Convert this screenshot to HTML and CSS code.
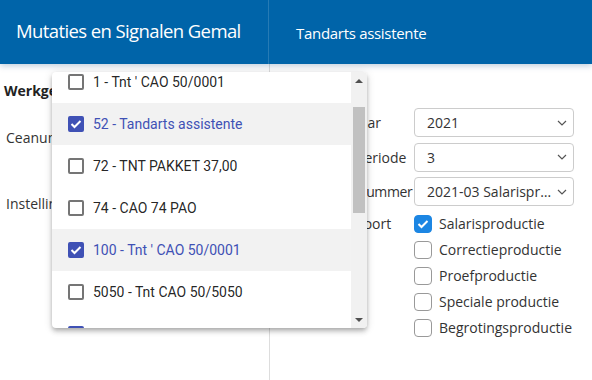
FILE: index.html
```html
<!doctype html>
<html lang="nl">
	<head>
		<meta charset="UTF-8" />
		<meta name="viewport" content="width=device-width, initial-scale=1.0" />
		<title>Mutaties en Signalen Gemal</title>
		<link rel="stylesheet" href="styles.css">
	</head>
	<body>
		<header class="topbar">
			<div class="brand">Mutaties en Signalen Gemal</div>
			<div class="context">Tandarts assistente</div>
		</header>

		<main class="content">
			<aside class="sidebar">
				<div class="side-title">Werkgever</div>
				<div class="side-field">Ceanummer</div>
				<div class="side-field side-field-low">Instellingen</div>
			</aside>

			<section class="form">
				<label class="form-label">Jaar</label>
				<div class="select">
					<span class="select-value">2021</span>
					<svg class="chevron" width="10" height="6" viewBox="0 0 10 6"><polyline points="1,1 5,5 9,1" /></svg>
				</div>

				<label class="form-label">Periode</label>
				<div class="select">
					<span class="select-value">3</span>
					<svg class="chevron" width="10" height="6" viewBox="0 0 10 6"><polyline points="1,1 5,5 9,1" /></svg>
				</div>

				<label class="form-label form-label-tight">Nummer</label>
				<div class="select">
					<span class="select-value">2021-03 Salarisproductie</span>
					<svg class="chevron" width="10" height="6" viewBox="0 0 10 6"><polyline points="1,1 5,5 9,1" /></svg>
				</div>

				<label class="form-label form-label-top">Soort</label>
				<div class="checks">
					<div class="check-row">
						<span class="check checked">
							<svg width="12" height="10" viewBox="0 0 12 10"><polyline points="1.5,5 4.5,8 10.5,2" /></svg>
						</span>
						Salarisproductie
					</div>
					<div class="check-row"><span class="check"></span>Correctieproductie</div>
					<div class="check-row"><span class="check"></span>Proefproductie</div>
					<div class="check-row"><span class="check"></span>Speciale productie</div>
					<div class="check-row"><span class="check"></span>Begrotingsproductie</div>
				</div>
			</section>

			<!-- open multi-select panel -->
			<div class="dropdown">
				<div class="options">
					<div class="option">
						<span class="box"></span>1 - Tnt ' CAO 50/0001
					</div>
					<div class="option selected">
						<span class="box"><svg width="12" height="10" viewBox="0 0 12 10"><polyline points="1.5,5 4.5,8 10.5,2" /></svg></span>52 - Tandarts assistente
					</div>
					<div class="option">
						<span class="box"></span>72 - TNT PAKKET 37,00
					</div>
					<div class="option">
						<span class="box"></span>74 - CAO 74 PAO
					</div>
					<div class="option selected">
						<span class="box"><svg width="12" height="10" viewBox="0 0 12 10"><polyline points="1.5,5 4.5,8 10.5,2" /></svg></span>100 - Tnt ' CAO 50/0001
					</div>
					<div class="option">
						<span class="box"></span>5050 - Tnt CAO 50/5050
					</div>
					<div class="option option-checked">
						<span class="box"><svg width="12" height="10" viewBox="0 0 12 10"><polyline points="1.5,5 4.5,8 10.5,2" /></svg></span>
					</div>
				</div>
				<div class="scrollbar">
					<div class="scroll-btn"><span class="arrow-up"></span></div>
					<div class="scroll-track"><div class="scroll-thumb"></div></div>
					<div class="scroll-btn"><span class="arrow-down"></span></div>
				</div>
			</div>
		</main>
	</body>
</html>
```

FILE: styles.css
```css
body {
	margin: 0;
	font-family: "Open Sans", "Noto Sans", sans-serif;
	font-size: 14px;
	color: #333;
	background-color: #fff;
	height: 100vh;
	display: flex;
	flex-direction: column;
	overflow: hidden;
}
.topbar {
	display: flex;
	height: 64px;
	background-color: #0064a9;
	color: #fff;
	box-shadow: 0 2px 6px rgba(0, 60, 120, 0.25);
	position: relative;
	z-index: 1;
	flex-shrink: 0;
}
.brand {
	width: 252px;
	padding-left: 16px;
	border-right: 1px solid rgba(255, 255, 255, 0.15);
	font-size: 18.5px;
	letter-spacing: -0.6px;
	line-height: 62px;
	white-space: nowrap;
}
.context {
	padding-left: 27px;
	font-size: 15px;
	letter-spacing: -0.3px;
	line-height: 66px;
}
.content {
	flex: 1;
	display: flex;
	position: relative;
}
.sidebar {
	width: 270px;
	border-right: 1px solid #ddd;
	padding: 17px 0 0 4px;
	box-sizing: border-box;
	white-space: nowrap;
	overflow: hidden;
}
.side-title {
	font-weight: bold;
	line-height: 20px;
	color: #222;
}
.side-field {
	margin: 27px 0 0 2px;
	line-height: 20px;
}
.side-field-low {
	margin-top: 46px;
}
.form {
	flex: 1;
	display: grid;
	grid-template-columns: 58px 160px;
	grid-auto-rows: 29px;
	row-gap: 5.5px;
	align-content: start;
	padding: 44px 0 0 86px;
}
.form-label {
	align-self: center;
	white-space: nowrap;
}
.form-label-tight {
	letter-spacing: -0.4px;
}
.form-label-top {
	align-self: start;
	line-height: 26px;
	margin-top: -1px;
}
.select {
	display: flex;
	align-items: center;
	border: 1px solid #ccc;
	border-radius: 4px;
	padding: 0 6px 0 12px;
	min-width: 0;
}
.select-value {
	flex: 1;
	min-width: 0;
	overflow: hidden;
	text-overflow: ellipsis;
	white-space: nowrap;
}
.chevron {
	flex-shrink: 0;
	margin-left: 3px;
	fill: none;
	stroke: #555;
	stroke-width: 1.2;
}
.checks {
	grid-row: span 5;
	margin-top: -1px;
}
.check-row {
	display: flex;
	align-items: center;
	gap: 7px;
	height: 26px;
	white-space: nowrap;
}
.check {
	width: 16px;
	height: 16px;
	border: 1px solid #999;
	border-radius: 4px;
	display: flex;
	align-items: center;
	justify-content: center;
}
.check.checked {
	background-color: #1c86e3;
	border-color: #1c86e3;
}
.check svg,
.box svg {
	fill: none;
	stroke: #fff;
	stroke-width: 2;
}
.dropdown {
	position: absolute;
	left: 52px;
	top: 8px;
	width: 315px;
	height: 256px;
	display: flex;
	background-color: #fff;
	border-radius: 4px;
	overflow: hidden;
	box-shadow: 0 2px 4px -1px rgba(0, 0, 0, 0.2), 0 4px 5px 0 rgba(0, 0, 0, 0.14), 0 1px 10px 0 rgba(0, 0, 0, 0.12);
	font-family: Roboto, "Open Sans", sans-serif;
	z-index: 2;
}
.options {
	flex: 1;
	margin-top: -11px;
}
.option {
	display: flex;
	align-items: center;
	height: 42px;
	padding-left: 16px;
	color: rgba(0, 0, 0, 0.87);
	white-space: nowrap;
}
.box {
	width: 12px;
	height: 12px;
	border: 2px solid #757575;
	border-radius: 2px;
	margin-right: 9px;
	display: flex;
	align-items: center;
	justify-content: center;
	flex-shrink: 0;
}
.option.selected {
	background-color: #f2f2f2;
	color: #3f51b5;
}
.option.selected .box,
.option-checked .box {
	background-color: #3f51b5;
	border-color: #3f51b5;
}
.scrollbar {
	width: 16px;
	background-color: #f1f1f1;
	display: flex;
	flex-direction: column;
}
.scroll-btn {
	height: 17px;
	display: flex;
	align-items: center;
	justify-content: center;
}
.arrow-up {
	border-left: 4px solid transparent;
	border-right: 4px solid transparent;
	border-bottom: 4px solid #505050;
}
.arrow-down {
	border-left: 4px solid transparent;
	border-right: 4px solid transparent;
	border-top: 4px solid #505050;
}
.scroll-track {
	flex: 1;
	padding: 18px 2px 0;
}
.scroll-thumb {
	height: 106px;
	background-color: #c1c1c1;
}
```
